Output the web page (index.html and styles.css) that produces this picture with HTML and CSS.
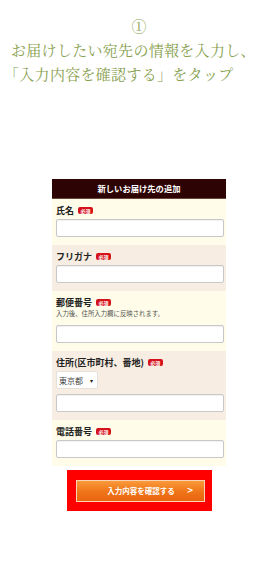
FILE: index.html
```html
<!DOCTYPE html>
<html lang="ja">
<head>
  <meta charset="UTF-8">
  <meta name="viewport" content="width=device-width, initial-scale=1.0">
  <title>お届け先の追加</title>
  <link rel="stylesheet" href="styles.css">
</head>
<body>
  <div class="step">
    <p class="step-num">①</p>
    <p class="step-text">お届けしたい宛先の情報を入力し、</p>
    <p class="step-text is-bracket">「入力内容を確認する」をタップ</p>
  </div>

  <div class="form">
    <h2 class="form-title">新しいお届け先の追加</h2>

    <div class="field">
      <p class="label">氏名<span class="req">必須</span></p>
      <div class="input"></div>
    </div>

    <div class="field is-alt">
      <p class="label">フリガナ<span class="req">必須</span></p>
      <div class="input"></div>
    </div>

    <div class="field">
      <p class="label">郵便番号<span class="req">必須</span></p>
      <p class="note">入力後、住所入力欄に反映されます。</p>
      <div class="input"></div>
    </div>

    <div class="field is-alt">
      <p class="label">住所(区市町村、番地)<span class="req">必須</span></p>
      <div class="select">東京都<span class="select-arrow">&#9662;</span></div>
      <div class="input"></div>
    </div>

    <div class="field">
      <p class="label">電話番号<span class="req">必須</span></p>
      <div class="input"></div>
    </div>
  </div>

  <div class="submit-frame">
    <div class="submit">入力内容を確認する<span class="submit-arrow">&gt;</span></div>
  </div>
</body>
</html>
```

FILE: styles.css
```css
* {
  margin: 0;
  padding: 0;
  box-sizing: border-box;
}

body {
  font-family: "Noto Sans CJK JP", sans-serif;
  color: #333;
  background: #fff;
  padding-left: 4px;
  height: 563px;
}

/* 手順の説明 */
.step {
  padding-top: 14px;
  font-family: "Noto Serif CJK JP", "Liberation Serif", "Noto Sans CJK JP", serif;
  font-size: 15px;
  line-height: 24px;
  color: #87a04e;
  white-space: nowrap;
}

.step-num {
  text-align: center;
}

.step-text {
  padding-left: 7px;
  letter-spacing: 0.3px;
}

.step-text.is-bracket {
  margin-left: -7px;
}

/* フォーム */
.form {
  width: 174px;
  margin: 93px auto 0;
}

.form-title {
  height: 20px;
  background: #2e0303;
  border-bottom: 1px solid #6a463c;
  color: #fff;
  font-size: 8.3px;
  font-weight: bold;
  line-height: 19px;
  text-align: center;
}

.field {
  background: #fffde9;
  padding: 5px 2px 8px 4px;
}

.field.is-alt {
  background: #f7ede3;
}

.label {
  display: flex;
  align-items: center;
  height: 12px;
  margin-bottom: 3px;
  font-size: 9px;
  font-weight: bold;
  color: #222;
  white-space: nowrap;
}

.req {
  display: inline-block;
  margin-left: 4px;
  width: 15px;
  height: 7px;
  border-radius: 2px;
  background: #d5121a;
  color: #fff;
  font-size: 5px;
  line-height: 7px;
  text-align: center;
  font-weight: bold;
}

.note {
  margin-top: -2px;
  margin-bottom: 6px;
  font-size: 6.4px;
  line-height: 10px;
  color: #555;
  white-space: nowrap;
}

.input {
  height: 18px;
  background: #fff;
  border: 1px solid #c8c8c8;
  border-radius: 2px;
  box-shadow: inset 0 1px 1px rgba(0, 0, 0, 0.06);
}

.select {
  display: flex;
  align-items: center;
  justify-content: space-between;
  width: 42px;
  height: 18px;
  margin-bottom: 5px;
  padding: 0 4px 0 2px;
  background: #fff;
  border: 1px solid #e6e0da;
  border-radius: 2px;
  font-size: 8px;
  color: #444;
}

.select-arrow {
  font-size: 6px;
  color: #222;
}

/* 確認ボタン */
.submit-frame {
  width: 145px;
  margin: 4px auto 0;
  padding: 10px 7px 9px 9px;
  background: #ff0000;
}

.submit {
  position: relative;
  height: 22px;
  border: 1px solid #fbd3b4;
  background: linear-gradient(#f99a3b, #ef7417 55%, #e8650f);
  color: #fff;
  font-size: 7.5px;
  font-weight: bold;
  line-height: 20px;
  text-align: center;
  padding-left: 2px;
}

.submit-arrow {
  position: absolute;
  right: 10px;
  top: 0;
  font-family: "DejaVu Sans", sans-serif;
  font-size: 8px;
  font-weight: bold;
  line-height: 20px;
}
```
